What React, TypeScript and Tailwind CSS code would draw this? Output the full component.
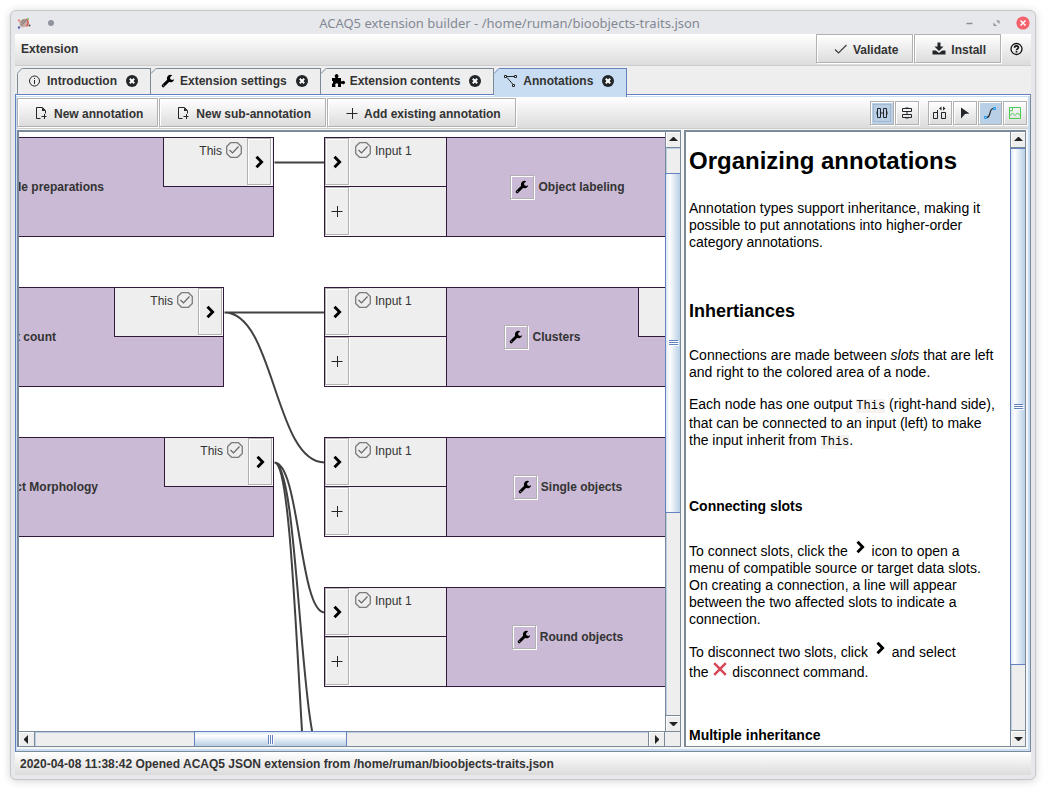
import React, { useState } from "react";

const etched =
  "border border-[#b1b1b1] shadow-[inset_1px_1px_0_#fff,1px_1px_0_#fff]";
const raised = "bg-linear-to-b from-white to-[#dcdcdc]";

type IconProps = { className?: string };

function Svg({ className = "", children }: IconProps & { children: React.ReactNode }) {
  return (
    <svg viewBox="0 0 16 16" width="16" height="16" fill="none" aria-hidden="true" className={`shrink-0 ${className}`}>
      {children}
    </svg>
  );
}

const AppLogo = () => (
  <Svg>
    <ellipse cx="8" cy="8" rx="4.8" ry="4" fill="#c9a9a3" transform="rotate(-30 8 8)" />
    <path d="M10 4c2.500 1.500 3 5 .5 7.500" stroke="#d9564e" strokeWidth="1.400" />
    <path d="M5 10.500 10.500 5M4.500 8l4-3.500" stroke="#8a8683" strokeWidth="1.200" />
    <circle cx="3" cy="5.500" r="1.200" fill="#e98b7c" />
    <circle cx="3" cy="12.500" r="1.200" fill="#5361b0" />
    <circle cx="12" cy="4" r="1" fill="#7db35e" />
    <circle cx="13.500" cy="10.500" r="1" fill="#4b4b4b" />
  </Svg>
);

const InfoIcon = () => (
  <Svg>
    <circle cx="7.500" cy="8" r="5" stroke="#232629" />
    <path d="M7.500 7v4M7.500 5v1" stroke="#232629" />
  </Svg>
);

const WrenchIcon = () => (
  <Svg>
    <path d="M3.200 12.800 9 7" stroke="#000" strokeWidth="3" strokeLinecap="round" />
    <path
      d="M12.200 2.200A3.700 3.700 0 1 0 14.200 6.200L12.300 7.100 10.300 6.200 10.100 4.200Z"
      fill="#000"
    />
    <circle cx="3.700" cy="12.300" r=".6" fill="#999" />
  </Svg>
);

const PuzzleIcon = () => (
  <Svg>
    <path
      d="M2 5h3.200V4.300a1.900 1.900 0 1 1 2.800 0V5h3v3.200h1.200a1.700 1.700 0 1 1 0 2.600H11V14H8v-1.500a1.500 1.500 0 1 0-2.600 0V14H2v-3.500h1V8H2Z"
      fill="#000"
    />
  </Svg>
);

const GraphIcon = () => (
  <Svg>
    <path d="M4 3.500h8M4 4.500l6.500 7.500" stroke="#232629" />
    <path d="M1.500 2.500h2v2h-2zM11.500 2.500h2v2h-2zM9.500 11.500h2v2h-2z" fill="#eef5fc" stroke="#232629" />
  </Svg>
);

const CloseIcon = () => (
  <Svg>
    <circle cx="8" cy="8" r="6" fill="#232629" />
    <path d="m5.800 5.800 4.400 4.400m0-4.400-4.400 4.400" stroke="#fff" strokeWidth="2" />
  </Svg>
);

const NewDocIcon = () => (
  <Svg>
    <path d="M6.500 13.500h-4v-11h6l3 3v3" stroke="#232629" />
    <path d="M8 2.500v3.500h3.500z" fill="#232629" />
    <path d="M7.500 11.500h5M10.500 9v5" stroke="#232629" />
  </Svg>
);

const PlusIcon = () => (
  <Svg>
    <path d="M2.500 8.500h11M8.500 3v11" stroke="#232629" />
  </Svg>
);

const CheckIcon = () => (
  <Svg>
    <path d="m2 8.500 3.500 3.500 8-8" stroke="#3b3e41" strokeWidth="1.200" />
  </Svg>
);

const InstallIcon = () => (
  <Svg>
    <path d="M6.500 1.500h3v4h3L8 10 3.500 5.500h3z" fill="#232629" />
    <path d="M1.500 9.500h3.300L8 12l3.200-2.500h3.300v4h-13z" fill="#232629" />
  </Svg>
);

const HelpIcon = () => (
  <Svg>
    <circle cx="7.500" cy="8" r="5.500" stroke="#111" strokeWidth="1.300" />
    <path
      d="M5.600 6.800c0-2.600 3.900-2.400 3.800-.2C9.400 8 7.500 7.800 7.500 9.300M7.500 10v1.500"
      stroke="#111"
      strokeWidth="1.700"
    />
  </Svg>
);

const ChevronIcon = ({ className = "" }: IconProps) => (
  <Svg className={className}>
    <path d="M5.500 2.700 10.600 8 5.500 13.300" stroke="#000" strokeWidth="2.900" />
  </Svg>
);

const DisconnectIcon = ({ className = "" }: IconProps) => (
  <Svg className={className}>
    <path d="m2.200 2.200 11.600 11.600m0-11.600-11.600 11.600" stroke="#da4453" strokeWidth="2.400" />
  </Svg>
);

const SlotIcon = () => (
  <Svg>
    <path d="M4.500.7h7L15.300 4.500v7L11.500 15.300h-7L.7 11.500v-7z" stroke="#7b7b7b" strokeWidth="1.300" strokeLinejoin="round" />
    <path d="m3.500 8 3 3 6-6.500" stroke="#666" strokeWidth="1.200" />
  </Svg>
);

const HorizontalIcon = () => (
  <Svg>
    <path d="M3.500 3.500h3v9h-3zM9.500 3.500h3v9h-3zM7 8h2" stroke="#232629" />
    <path d="M2.500 6.500v3M13.500 6.500v3" stroke="#6f7d8b" />
  </Svg>
);

const VerticalIcon = () => (
  <Svg>
    <path d="M3.500 3.500h9v3h-9zM3.500 9.500h9v3h-9zM8 7v2" stroke="#232629" />
    <path d="M6.500 2.500h3M6.500 13.500h3" stroke="#8a8d90" />
  </Svg>
);

const ArrangeIcon = () => (
  <Svg>
    <path d="M1.500 7.500h4v6h-4zM9.500 7.500h4v6h-4zM5.500 8V5" stroke="#232629" />
    <path d="M9.500 1.500v4L7 3.500zM11 1.500v4l2.500-2z" fill="#232629" />
  </Svg>
);

const CursorIcon = () => (
  <Svg>
    <path d="m4 2.500 8.500 6L8 9l-4 4.500z" fill="#232629" />
  </Svg>
);

const CurveIcon = () => (
  <Svg>
    <path d="M4.500 12.500c5 0 2-9 7-9" stroke="#232629" strokeWidth="1.200" />
    <path d="M2.500 11.500h2v2h-2zM11.500 2.500h2v2h-2z" stroke="#1d99f3" />
  </Svg>
);

const ImageIcon = () => (
  <Svg>
    <path d="M2.500 2.500h11v11h-11zM2.500 11l3-3 2.500 2.500L10.500 8l3 2.500M3 6l2.500-.5V3" stroke="#4ecb55" />
  </Svg>
);

/* ---------- scroll bars ---------- */

function ScrollArrow({ dir }: { dir: "up" | "down" | "left" | "right" }) {
  const shape = {
    up: "M3 9 7 5h1l4 4z",
    down: "M3 6h9L8 10H7z",
    left: "M9 3v9L5 8V7z",
    right: "M6 3v9l4-4V7z",
  }[dir];
  const edge = {
    up: "h-4 border-b",
    down: "h-4 border-t",
    left: "w-4 border-r",
    right: "w-4 border-l",
  }[dir];
  return (
    <button
      type="button"
      aria-label={`Scroll ${dir}`}
      className={`flex shrink-0 items-center justify-center border-[#7a8a99] bg-[#eee] shadow-[inset_1px_1px_0_#fff] ${edge}`}
    >
      <svg viewBox="0 0 15 15" width="15" height="15" className="shrink-0" aria-hidden="true">
        <path d={shape} fill="#222" />
      </svg>
    </button>
  );
}

function VScroll({ before, thumb, after }: { before: string; thumb: string; after: string }) {
  return (
    <div className="flex w-[15px] shrink-0 flex-col border-l border-[#7a8a99] bg-[#eee]">
      <ScrollArrow dir="up" />
      <div className="flex min-h-0 flex-1 flex-col shadow-[inset_1px_1px_0_#b8cfe5]">
        <div className={`basis-0 ${before}`} />
        <div
          className={`-ml-px flex basis-0 flex-col items-center justify-center gap-px border border-r-0 border-[#6382bf] bg-linear-to-r from-[#dbe7f3] via-white via-25% to-[#b8cfe5] ${thumb}`}
        >
          {[0, 1, 2].map((i) => (
            <span key={i} className="h-px w-[9px] bg-[#6382bf] shadow-[1px_1px_0_#fff]" />
          ))}
        </div>
        <div className={`basis-0 ${after}`} />
      </div>
      <ScrollArrow dir="down" />
    </div>
  );
}

function HScroll() {
  return (
    <div className="flex h-[15px] shrink-0 border-t border-[#7a8a99] bg-[#eee]">
      <ScrollArrow dir="left" />
      <div className="flex min-w-0 flex-1 shadow-[inset_1px_1px_0_#b8cfe5]">
        <div className="grow-160 basis-0" />
        <div className="-mt-px flex grow-153 basis-0 items-center justify-center gap-px border border-b-0 border-[#6382bf] bg-linear-to-b from-[#dbe7f3] via-white via-25% to-[#b8cfe5]">
          {[0, 1, 2].map((i) => (
            <span key={i} className="h-[9px] w-px bg-[#6382bf] shadow-[1px_1px_0_#fff]" />
          ))}
        </div>
        <div className="grow-303 basis-0" />
      </div>
      <ScrollArrow dir="right" />
      <div className="w-4 border-l border-[#7a8a99]" />
    </div>
  );
}

/* ---------- graph ---------- */

function SlotButton({ label, children }: { label: string; children: React.ReactNode }) {
  return (
    <button type="button" aria-label={label} className={`flex w-6 shrink-0 items-center justify-center bg-[#eee] ${etched}`}>
      {children}
    </button>
  );
}

function OutputSlot({ size = "w-[109px] pr-px" }: { size?: string }) {
  return (
    <div className={`flex h-[49px] shrink-0 justify-end border-b border-l border-[#32193b] bg-[#eee] pb-px ${size}`}>
      <div className="flex h-6 items-center gap-1 pr-[5px]">
        <span className="pt-[2px]">This</span>
        <SlotIcon />
      </div>
      <SlotButton label="Connect output This">
        <ChevronIcon />
      </SlotButton>
    </div>
  );
}

function SourceNode({ label, place, pad, slot }: { label: string; place: string; pad: string; slot?: string }) {
  return (
    <div className={`absolute -left-5 flex h-[100px] border border-[#32193b] bg-[#cabad5] ${place}`}>
      <div className={`flex flex-1 items-center justify-end font-bold whitespace-nowrap ${pad}`}>{label}</div>
      <OutputSlot size={slot} />
    </div>
  );
}

function TargetNode({ label, place, output }: { label: string; place: string; output?: boolean }) {
  return (
    <div className={`absolute left-[305px] flex h-[100px] border border-[#32193b] bg-[#cabad5] ${place}`}>
      <div className="flex w-[122px] shrink-0 flex-col border-r border-[#32193b] bg-[#eee]">
        <div className="flex h-[49px] border-b border-[#32193b] pb-px">
          <SlotButton label="Connect Input 1">
            <ChevronIcon />
          </SlotButton>
          <div className="flex h-6 items-center gap-1 pl-[6px]">
            <SlotIcon />
            <span className="pt-[2px]">Input 1</span>
          </div>
        </div>
        <div className="flex flex-1 pb-px">
          <SlotButton label="Add input">
            <PlusIcon />
          </SlotButton>
        </div>
      </div>
      <div className="flex flex-1 items-center justify-center gap-1">
        <button type="button" aria-label={`Configure ${label}`} className={`flex size-6 items-center justify-center ${etched}`}>
          <WrenchIcon />
        </button>
        <span className="font-bold">{label}</span>
      </div>
      {output ? <OutputSlot size="w-[110px] pr-[2px]" /> : <div className="w-[110px]" />}
    </div>
  );
}

function Graph() {
  return (
    <div className="relative min-h-0 min-w-0 flex-1 overflow-hidden bg-white">
      <svg className="absolute inset-0 size-full" fill="none" stroke="#414141" strokeWidth="2" aria-hidden="true">
        <g transform="translate(.5 .5)">
          <path d="M255 30h50M205 180h100M205 180C255 180 255 330 305 330" />
          <path d="M255 330C280 330 280 480 305 480M255 330C280 330 280 630 305 630M255 330C280 330 280 780 305 780" />
        </g>
      </svg>
      <SourceNode label="le preparations" place="top-[5px] w-[275px]" pad="pr-[59px]" slot="w-[110px] pr-[2px]" />
      <SourceNode label="t count" place="top-[155px] w-[225px]" pad="pr-[58px]" />
      <SourceNode label="ct Morphology" place="top-[305px] w-[275px]" pad="pr-[66px]" />
      <TargetNode label="Object labeling" place="top-[5px] w-[475px]" />
      <TargetNode label="Clusters" place="top-[155px] w-[425px]" output />
      <TargetNode label="Single objects" place="top-[305px] w-[475px]" />
      <TargetNode label="Round objects" place="top-[455px] w-[475px]" />
    </div>
  );
}

/* ---------- tabs and toolbar ---------- */

function Tab({
  icon,
  label,
  active,
  first,
  onSelect,
}: {
  icon: React.ReactNode;
  label: string;
  active: boolean;
  first: boolean;
  onSelect: () => void;
}) {
  const line = active ? "#6382bf" : "#7a8a99";
  return (
    <div
      className={`relative flex items-center border-t border-r pr-[10px] pl-[9px] ${first ? "border-l" : ""} ${
        active ? "z-10 -mb-[3px] h-[29px] border-[#6382bf] bg-[#c8ddf2] pb-[5px]" : "h-[26px] border-[#7a8a99] bg-[#eee] pb-[2px]"
      }`}
    >
      <svg className={`absolute -top-px ${first ? "-left-px" : "left-0"}`} width="6" height="6" aria-hidden="true">
        <path d="M0 0h6L0 6z" fill="#eee" />
        <path d="M0 5.500 5.500 0" stroke={line} />
      </svg>
      <button type="button" role="tab" aria-selected={active} onClick={onSelect} className="flex items-center gap-1 font-bold">
        {icon}
        {label}
      </button>
      <button type="button" aria-label={`Close ${label}`} className="ml-[7px]">
        <CloseIcon />
      </button>
    </div>
  );
}

function ToolButton({ icon, label }: { icon: React.ReactNode; label: string }) {
  return (
    <button type="button" className={`flex h-[29px] items-center gap-1 pr-[14px] pl-4 font-bold whitespace-nowrap ${raised} ${etched}`}>
      {icon}
      <span className="pt-[2px]">{label}</span>
    </button>
  );
}

function IconToggle({ icon, label, on, focus }: { icon: React.ReactNode; label: string; on?: boolean; focus?: boolean }) {
  return (
    <button
      type="button"
      aria-label={label}
      aria-pressed={!!on}
      className={`flex size-6 items-center justify-center ${etched} ${on ? "bg-[#b8cfe5]" : raised} ${
        focus ? "outline-1 -outline-offset-4 outline-[#a3b8cc]" : ""
      }`}
    >
      {icon}
    </button>
  );
}

/* ---------- documentation ---------- */

function Help() {
  return (
    <article className="min-w-0 flex-1 overflow-hidden bg-white pt-[13px] pr-[14px] pl-[3px] text-[14px] leading-[17px] text-black">
      <h1 className="text-[24px] leading-8 font-bold">Organizing annotations</h1>
      <p className="mt-[23px]">
        Annotation types support inheritance, making it possible to put annotations into higher-order category
        annotations.
      </p>
      <h2 className="mt-[49px] text-[18px] leading-[22px] font-bold">Inhertiances</h2>
      <p className="mt-[25px]">
        Connections are made between <em>slots</em> that are left and right to the colored area of a node.
      </p>
      <p className="mt-[15px]">
        Each node has one output <code className="bg-[#f5f2f0] font-['Liberation_Mono',monospace] text-[12px]">This</code>{" "}
        (right-hand side), that can be connected to an input (left) to make the input inherit from{" "}
        <code className="bg-[#f5f2f0] font-['Liberation_Mono',monospace] text-[12px]">This</code>.
      </p>
      <h3 className="mt-[47px] font-bold">Connecting slots</h3>
      <p className="mt-[24px]">
        To connect slots, click the <ChevronIcon className="mb-px inline align-baseline" /> icon to open a menu of
        compatible source or target data slots. On creating a connection, a line will appear between the two affected
        slots to indicate a connection.
      </p>
      <p className="mt-[12px]">
        To disconnect two slots, click <ChevronIcon className="mb-px inline align-baseline" /> and select{" "}
        <span className="whitespace-nowrap">
          the <DisconnectIcon className="inline align-baseline" /> disconnect
        </span>{" "}
        command.
      </p>
      <h3 className="mt-[46px] font-bold">Multiple inheritance</h3>
    </article>
  );
}

const tabs = [
  { label: "Introduction", icon: <InfoIcon /> },
  { label: "Extension settings", icon: <WrenchIcon /> },
  { label: "Extension contents", icon: <PuzzleIcon /> },
  { label: "Annotations", icon: <GraphIcon /> },
];

export default function App() {
  const [current, setCurrent] = useState(3);
  return (
    <div className="flex h-screen bg-white p-[10px] font-['Liberation_Sans',Arial,sans-serif] text-[12px] leading-4 text-[#333]">
      <div className="flex min-w-0 flex-1 flex-col rounded-md border border-[#c6c7ca] bg-[#e7e8eb] px-1 pb-1 shadow-[0_1px_8px_rgba(0,0,0,0.18)]">
        <header className="flex h-[23px] shrink-0 items-center">
          <div className="flex w-20 items-center gap-4 pl-px">
            <AppLogo />
            <span className="size-[6px] rounded-full bg-[#9094a0]" />
          </div>
          <h1 className="flex-1 text-center font-['Noto_Sans',sans-serif] text-[13px] text-[#838895]">
            ACAQ5 extension builder - /home/ruman/bioobjects-traits.json
          </h1>
          <div className="flex w-[107px] items-center justify-end gap-[11px]">
            <button type="button" aria-label="Minimize">
              <Svg>
                <path d="M5.500 8.500h6" stroke="#8b8f98" strokeWidth="1.500" />
              </Svg>
            </button>
            <button type="button" aria-label="Restore">
              <Svg>
                <path d="M8 5.500h3.500V9zM5.500 7.500V11H9z" fill="#8f929b" />
              </Svg>
            </button>
            <button type="button" aria-label="Close">
              <Svg>
                <circle cx="8" cy="8" r="6.600" fill="#f4606c" />
                <path d="m5.500 5.500 5 5m0-5-5 5" stroke="#fff" strokeWidth="1.500" />
              </Svg>
            </button>
          </div>
        </header>

        <nav className={`flex h-8 shrink-0 items-start border-b border-[#ccc] ${raised}`}>
          <button type="button" className="flex h-[29px] items-center pl-[6px] font-bold">
            Extension
          </button>
          <div className="ml-auto flex gap-px">
            <ToolButton icon={<CheckIcon />} label="Validate" />
            <ToolButton icon={<InstallIcon />} label="Install" />
            <button type="button" aria-label="Help" className="flex h-[29px] w-[29px] items-center justify-center">
              <HelpIcon />
            </button>
          </div>
        </nav>

        <div role="tablist" className="flex shrink-0 bg-[#eee] pt-[2px] pl-[2px]">
          {tabs.map((t, i) => (
            <Tab key={t.label} icon={t.icon} label={t.label} first={i === 0} active={i === current} onSelect={() => setCurrent(i)} />
          ))}
        </div>

        <main className="flex min-h-0 flex-1 flex-col border border-t-[#6382bf] border-r-[#7a8a99] border-b-[#7a8a99] border-l-[#6382bf] bg-[#c8ddf2] pt-[2px] pr-[2px] pb-[2px] pl-px shadow-[inset_0_1px_0_#fff]">
          <div className={`flex h-8 shrink-0 items-start gap-px border-b border-[#ccc] pt-px pr-px ${raised}`}>
            <ToolButton icon={<NewDocIcon />} label="New annotation" />
            <ToolButton icon={<NewDocIcon />} label="New sub-annotation" />
            <ToolButton icon={<PlusIcon />} label="Add existing annotation" />
            <div className="ml-auto flex gap-px pt-[3px]">
              <IconToggle icon={<HorizontalIcon />} label="Horizontal layout" on focus />
              <IconToggle icon={<VerticalIcon />} label="Vertical layout" />
              <div className="w-[7px]" />
              <IconToggle icon={<ArrangeIcon />} label="Arrange nodes" />
              <IconToggle icon={<CursorIcon />} label="Center view" />
              <IconToggle icon={<CurveIcon />} label="Curved connections" on />
              <IconToggle icon={<ImageIcon />} label="Export image" />
            </div>
          </div>

          <div className="flex min-h-0 flex-1 gap-[3px] bg-[#f6f6f6] pt-px pr-[2px] pb-[2px]">
            <section aria-label="Graph" className="flex min-w-0 flex-1 flex-col border-t-2 border-r border-b border-l-2 border-[#7a8a99]">
              <div className="flex min-h-0 flex-1">
                <Graph />
                <VScroll before="grow-25" thumb="grow-340" after="grow-203" />
              </div>
              <HScroll />
            </section>
            <section aria-label="Documentation" className="flex w-[342px] shrink-0 border-t-2 border-r border-b border-l-2 border-[#7a8a99]">
              <Help />
              <VScroll before="grow-0" thumb="grow-517" after="grow-65" />
            </section>
          </div>
        </main>

        <footer className={`flex h-[23px] shrink-0 items-center pl-[5px] font-bold ${raised}`}>
          2020-04-08 11:38:42 Opened ACAQ5 JSON extension from /home/ruman/bioobjects-traits.json
        </footer>
      </div>
    </div>
  );
}
